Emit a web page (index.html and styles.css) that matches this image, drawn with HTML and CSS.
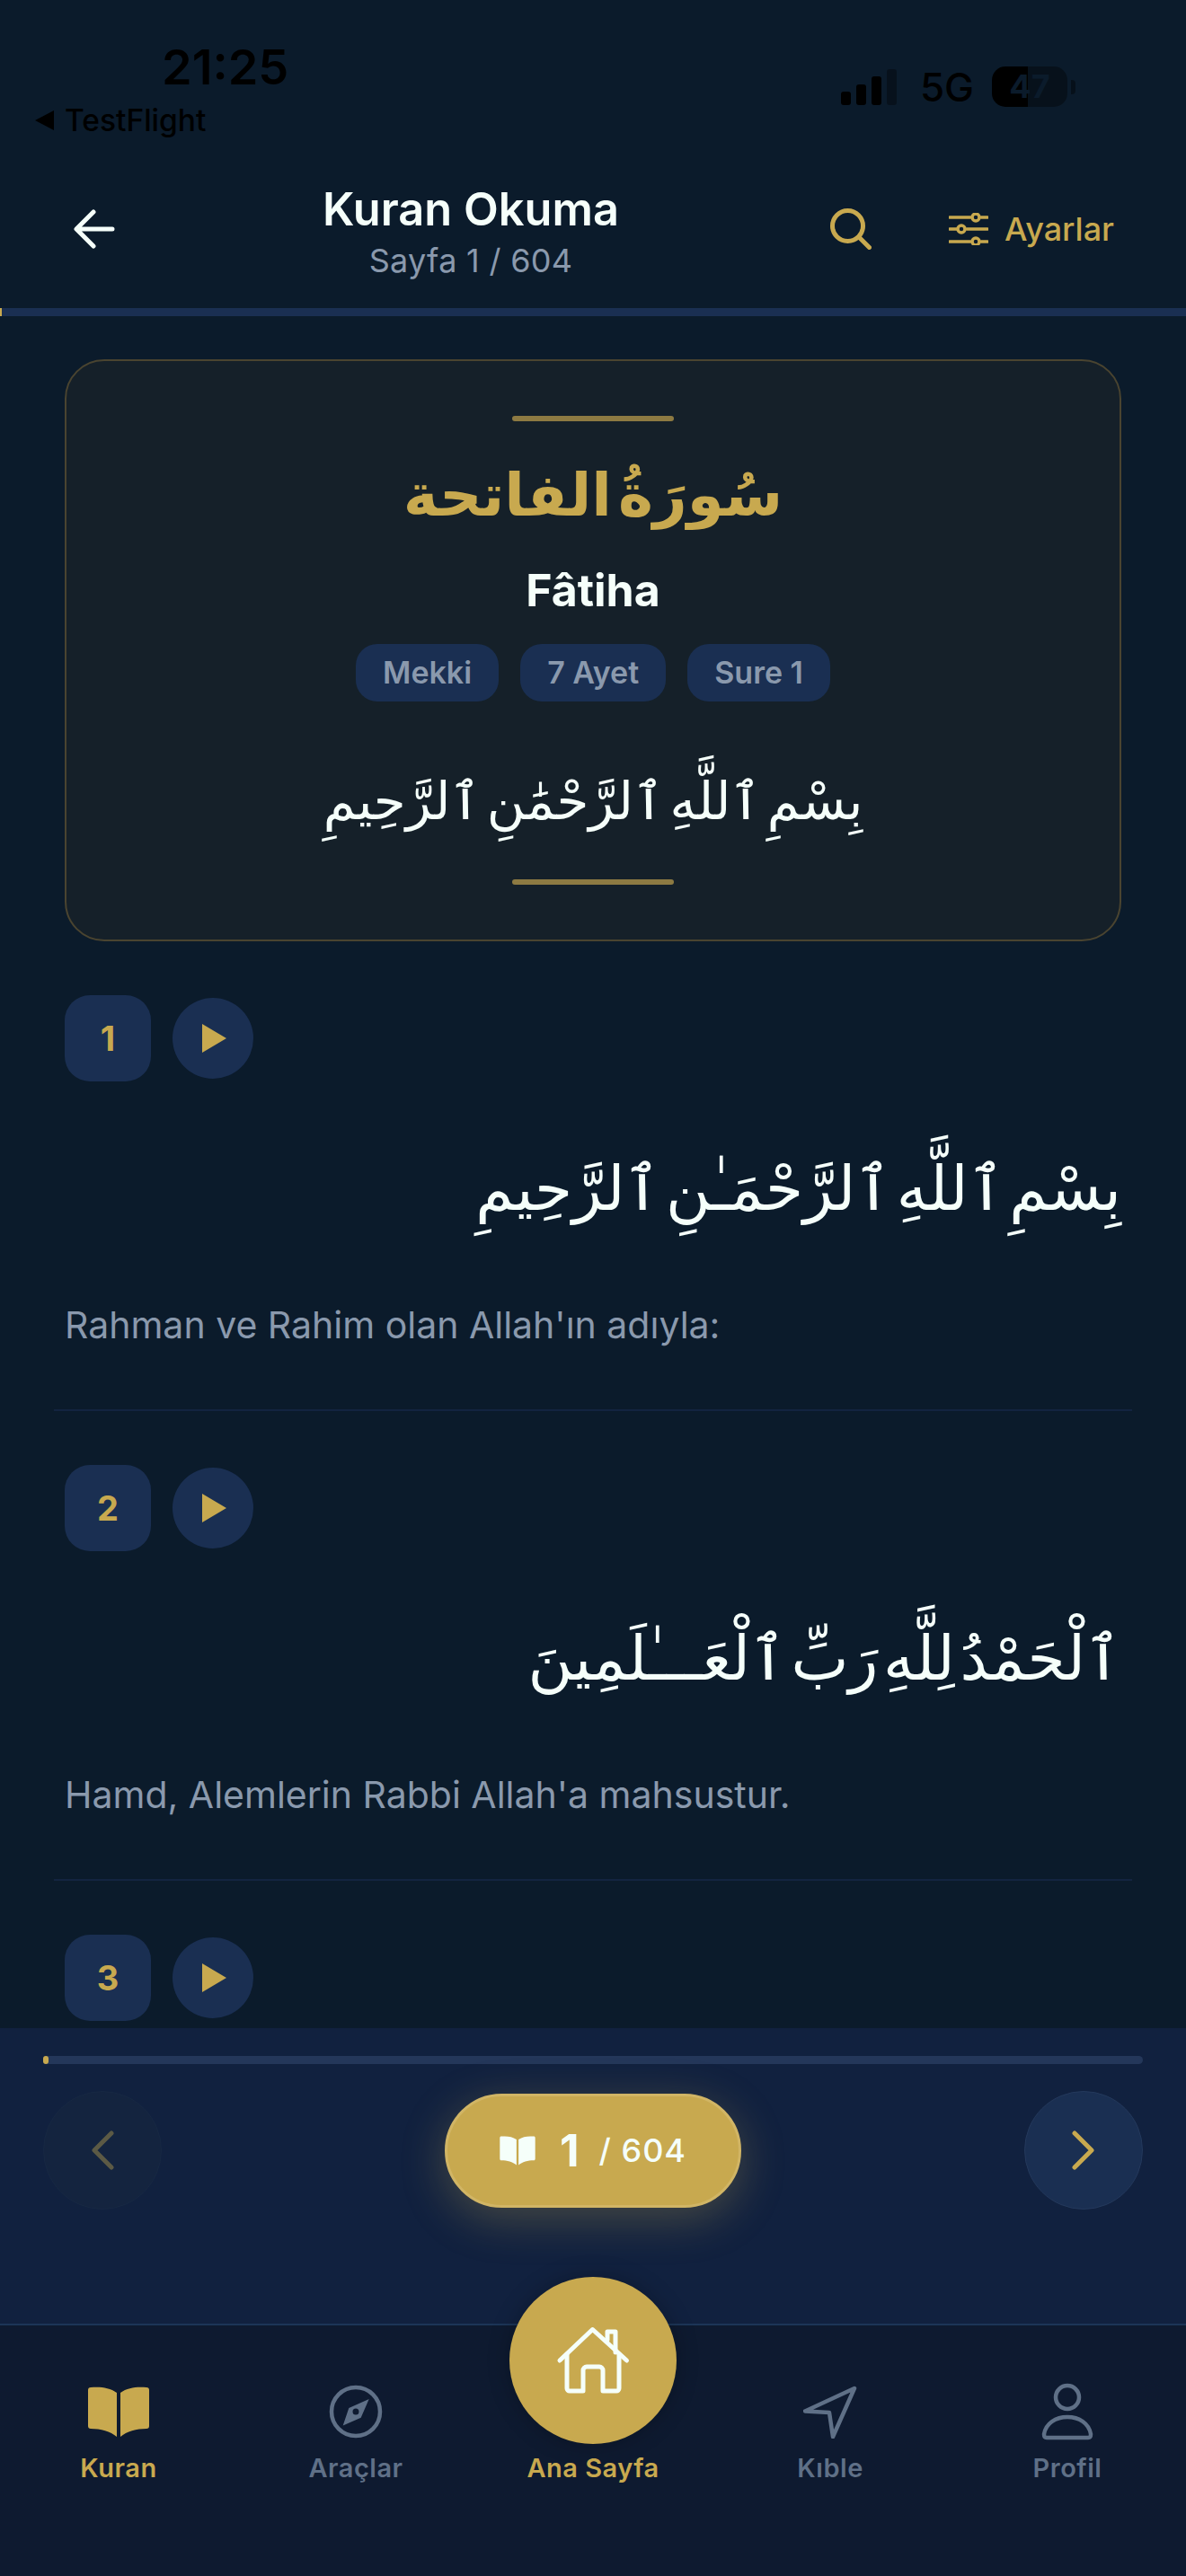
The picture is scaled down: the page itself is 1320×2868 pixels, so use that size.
FILE: index.html
```html
<!DOCTYPE html>
<html lang="tr">
<head>
    <meta charset="UTF-8">
    <meta name="viewport" content="width=device-width, initial-scale=1.0">
    <title>Kuran Okuma</title>
    <link rel="stylesheet" href="styles.css">
</head>
<body>
    <div class="app">
        <div class="status-bar">
            <div class="status-left">
                <div class="status-time">21:25</div>
                <div class="status-back"><span class="back-triangle"></span>TestFlight</div>
            </div>
            <div class="status-right">
                <div class="signal">
                    <span class="signal-bar bar-1"></span>
                    <span class="signal-bar bar-2"></span>
                    <span class="signal-bar bar-3"></span>
                    <span class="signal-bar bar-4"></span>
                </div>
                <div class="network">5G</div>
                <div class="battery">
                    <div class="battery-body">47</div>
                    <span class="battery-nub"></span>
                </div>
            </div>
        </div>

        <header class="top-header">
            <svg class="back-arrow" width="46" height="44" viewBox="0 0 46 44" fill="none" stroke="#f5fffa" stroke-width="5" stroke-linecap="round" stroke-linejoin="round">
                <path d="M43 22H4M22 3 3 22l19 19"/>
            </svg>
            <div class="header-title">
                <h1>Kuran Okuma</h1>
                <div class="header-sub">Sayfa 1 / 604</div>
            </div>
            <div class="header-actions">
                <svg width="46" height="46" viewBox="0 0 46 46" fill="none" stroke="#c8a94f" stroke-width="5" stroke-linecap="round">
                    <circle cx="19.500" cy="19.500" r="17"/>
                    <path d="M32 32l11.500 11.500"/>
                </svg>
                <div class="settings">
                    <svg width="44" height="36" viewBox="0 0 44 36" fill="none" stroke="#c8a94f" stroke-width="3.500" stroke-linecap="round">
                        <path d="M1 5h23M36 5h7M1 18h8M20 18h23M1 32h23M36 32h7"/>
                        <circle cx="30" cy="5" r="4"/>
                        <circle cx="14" cy="18" r="4"/>
                        <circle cx="30" cy="32" r="4"/>
                    </svg>
                    <span>Ayarlar</span>
                </div>
            </div>
        </header>

        <div class="read-progress"><div class="read-progress-fill"></div></div>

        <main class="content">
            <section class="sura-card">
                <div class="sura-line"></div>
                <div class="sura-arabic" dir="rtl" lang="ar">سُورَةُ الفاتحة</div>
                <div class="sura-name">Fâtiha</div>
                <div class="sura-tags">
                    <span class="tag">Mekki</span>
                    <span class="tag">7 Ayet</span>
                    <span class="tag">Sure 1</span>
                </div>
                <div class="sura-basmala" dir="rtl" lang="ar">بِسْمِ ٱللَّهِ ٱلرَّحْمَٰنِ ٱلرَّحِيمِ</div>
                <div class="sura-line"></div>
            </section>

            <article class="verse">
                <div class="verse-head">
                    <div class="verse-num">1</div>
                    <div class="verse-play"><span class="play-icon"></span></div>
                </div>
                <div class="verse-arabic" dir="rtl" lang="ar">بِسْمِ ٱللَّهِ ٱلرَّحْمَـٰنِ ٱلرَّحِيمِ</div>
                <p class="verse-text">Rahman ve Rahim olan Allah'ın adıyla:</p>
            </article>

            <article class="verse">
                <div class="verse-head">
                    <div class="verse-num">2</div>
                    <div class="verse-play"><span class="play-icon"></span></div>
                </div>
                <div class="verse-arabic" dir="rtl" lang="ar">ٱلْحَمْدُ لِلَّهِ رَبِّ ٱلْعَـــٰلَمِينَ</div>
                <p class="verse-text">Hamd, Alemlerin Rabbi Allah'a mahsustur.</p>
            </article>

            <article class="verse">
                <div class="verse-head">
                    <div class="verse-num">3</div>
                    <div class="verse-play"><span class="play-icon"></span></div>
                </div>
            </article>
        </main>

        <section class="page-panel">
            <div class="page-track"><div class="page-track-fill"></div></div>
            <div class="page-row">
                <div class="page-btn page-btn-off">
                    <svg width="26" height="44" viewBox="0 0 26 44" fill="none" stroke="#5c5a45" stroke-width="5" stroke-linecap="round" stroke-linejoin="round">
                        <path d="M23 3 4 22l19 19"/>
                    </svg>
                </div>
                <div class="page-pill">
                    <svg width="40" height="33" viewBox="0 0 68 57" fill="#f5fffa">
                        <path d="M3 1C13 0 24 1 32 7V56C25 50 14 47 3 47 1 47 0 46 0 44V4C0 2 1 1 3 1Z"/>
                        <path d="M65 1C55 0 44 1 36 7V56C43 50 54 47 65 47 67 47 68 46 68 44V4C68 2 67 1 65 1Z"/>
                    </svg>
                    <span class="page-current">1</span>
                    <span class="page-total">/ 604</span>
                </div>
                <div class="page-btn">
                    <svg width="26" height="44" viewBox="0 0 26 44" fill="none" stroke="#c8a94f" stroke-width="5" stroke-linecap="round" stroke-linejoin="round">
                        <path d="M3 3l19 19L3 41"/>
                    </svg>
                </div>
            </div>
        </section>

        <nav class="tab-bar">
            <div class="tab tab-active">
                <div class="tab-icon">
                    <svg width="68" height="57" viewBox="0 0 68 57" fill="#c8a94f">
                        <path d="M3 1C13 0 24 1 32 7V56C25 50 14 47 3 47 1 47 0 46 0 44V4C0 2 1 1 3 1Z"/>
                        <path d="M65 1C55 0 44 1 36 7V56C43 50 54 47 65 47 67 47 68 46 68 44V4C68 2 67 1 65 1Z"/>
                    </svg>
                </div>
                <span>Kuran</span>
            </div>
            <div class="tab">
                <div class="tab-icon">
                    <svg width="60" height="60" viewBox="-30 -30 60 60" fill="none" stroke="#5f7087" stroke-width="4.500">
                        <circle r="27"/>
                        <path fill="#5f7087" fill-rule="evenodd" stroke="none" d="M14.700-14 5.700 6.700-14.300 15.400-7.700-4ZM0-3.500A3.500 3.500 0 1 0 0 3.500 3.500 3.500 0 1 0 0-3.500Z"/>
                    </svg>
                </div>
                <span>Araçlar</span>
            </div>
            <div class="tab tab-active">
                <div class="tab-icon"></div>
                <span>Ana Sayfa</span>
                <div class="home-btn">
                    <svg width="84" height="76" viewBox="0 0 84 76" fill="none" stroke="#f5fffa" stroke-width="5" stroke-linecap="round" stroke-linejoin="round">
                        <path d="M5 38 41.500 3.500 79.500 38"/>
                        <path d="M13 31V69a3 3 0 0 0 3 3H31V49a4 4 0 0 1 4-4H49a4 4 0 0 1 4 4V72H68a3 3 0 0 0 3-3V31"/>
                        <path d="M58 15V6H67V29"/>
                    </svg>
                </div>
            </div>
            <div class="tab">
                <div class="tab-icon">
                    <svg width="60" height="60" viewBox="0 0 60 60" fill="none" stroke="#5f7087" stroke-width="4.500" stroke-linejoin="round">
                        <path d="M57 4 2 29.500 29 31 33 58Z"/>
                    </svg>
                </div>
                <span>Kıble</span>
            </div>
            <div class="tab">
                <div class="tab-icon">
                    <svg width="60" height="64" viewBox="0 0 60 64" fill="none" stroke="#5f7087" stroke-width="4.500" stroke-linejoin="round">
                        <circle cx="30" cy="16" r="13"/>
                        <path d="M4 57C6 45 17 38 30 38S54 45 56 57C56 60 55 61 53 61H7C5 61 4 60 4 57Z"/>
                    </svg>
                </div>
                <span>Profil</span>
            </div>
        </nav>
    </div>
</body>
</html>
```

FILE: styles.css
```css
* {
    box-sizing: border-box;
}
body {
    margin: 0;
    padding: 0;
    background-color: #0b1b2b;
    font-family: 'Inter', 'Roboto', sans-serif;
    color: #f5fffa;
}
.app {
    width: 1320px;
    height: 2868px;
    display: flex;
    flex-direction: column;
    overflow: hidden;
    background-color: #0b1b2b;
}

/* status bar */
.status-bar {
    height: 170px;
    display: flex;
    justify-content: space-between;
    color: #000;
    flex-shrink: 0;
}
.status-left {
    padding: 48px 0 0 39px;
}
.status-time {
    padding-left: 141px;
    font-size: 54px;
    line-height: 54px;
    font-weight: 600;
}
.status-back {
    display: flex;
    align-items: center;
    gap: 12px;
    margin-top: 14px;
    font-size: 33.500px;
    line-height: 36px;
    font-weight: 500;
}
.back-triangle {
    width: 0;
    height: 0;
    border-top: 11px solid transparent;
    border-bottom: 11px solid transparent;
    border-right: 21px solid #000;
}
.status-right {
    display: flex;
    align-items: flex-start;
    padding: 74px 123px 0 0;
}
.signal {
    display: flex;
    align-items: flex-end;
    gap: 6px;
    height: 40px;
    margin-top: 3px;
}
.signal-bar {
    width: 11px;
    background-color: #000;
    border-radius: 3px;
}
.bar-1 { height: 15px; }
.bar-2 { height: 23px; }
.bar-3 { height: 32px; }
.bar-4 { height: 40px; background-color: rgba(0, 0, 0, 0.35); }
.network {
    margin-left: 26px;
    font-size: 44px;
    line-height: 46px;
    font-weight: 500;
}
.battery {
    display: flex;
    align-items: center;
    gap: 4px;
    margin-left: 20px;
}
.battery-body {
    width: 84px;
    height: 45px;
    border-radius: 15px;
    background: linear-gradient(90deg, #000 48%, rgba(0, 0, 0, 0.38) 48%);
    color: #0b1b2b;
    font-size: 36px;
    line-height: 45px;
    font-weight: 700;
    text-align: center;
}
.battery-nub {
    width: 5px;
    height: 16px;
    border-radius: 0 4px 4px 0;
    background-color: rgba(0, 0, 0, 0.38);
}

/* header */
.top-header {
    height: 173px;
    display: flex;
    align-items: flex-start;
    padding: 38px 80px 0 82px;
    flex-shrink: 0;
}
.back-arrow {
    margin-top: 25px;
}
.header-title {
    flex: 1;
    text-align: center;
    padding-right: 4px;
}
.header-title h1 {
    margin: 0;
    font-size: 50.500px;
    line-height: 50px;
    font-weight: 600;
}
.header-sub {
    margin-top: 12px;
    font-size: 36px;
    line-height: 40px;
    letter-spacing: 0.3px;
    color: #8a99ad;
}
.header-actions {
    display: flex;
    align-items: center;
    justify-content: space-between;
    width: 316px;
    margin-top: 24px;
    color: #c8a94f;
}
.settings {
    display: flex;
    align-items: center;
    gap: 18px;
    font-size: 36px;
    font-weight: 500;
}
.read-progress {
    height: 9px;
    background-color: #1a2f52;
    flex-shrink: 0;
}
.read-progress-fill {
    width: 2px;
    height: 100%;
    background-color: #c8a94f;
}

/* reading area */
.content {
    flex: 1;
    min-height: 0;
    overflow: hidden;
    padding: 48px 72px 0;
}
.sura-card {
    display: flex;
    flex-direction: column;
    align-items: center;
    padding: 61px 0;
    background-color: #152029;
    border: 2px solid #4a4430;
    border-radius: 44px;
}
.sura-line {
    width: 180px;
    height: 6px;
    border-radius: 3px;
    background-color: #8d7a42;
}
.sura-arabic {
    margin-top: 33px;
    font-family: 'DejaVu Sans', sans-serif;
    font-size: 66px;
    line-height: 100px;
    font-weight: 700;
    word-spacing: -16px;
    color: #c8a94f;
}
.sura-name {
    margin-top: 25px;
    font-size: 50px;
    line-height: 60px;
    font-weight: 700;
}
.sura-tags {
    display: flex;
    gap: 24px;
    margin-top: 30px;
}
.tag {
    padding: 0 30px;
    height: 64px;
    border-radius: 24px;
    background-color: #1a2f52;
    color: #8a99ad;
    font-size: 34px;
    line-height: 64px;
    font-weight: 600;
}
.sura-basmala {
    margin: 56px 0 32px;
    font-family: 'DejaVu Sans', sans-serif;
    font-size: 58px;
    line-height: 110px;
    word-spacing: -12px;
}
.verse {
    margin: 0 -12px;
    padding: 60px 12px 64px;
    border-bottom: 2px solid #132440;
}
.verse-head {
    display: flex;
    align-items: center;
    gap: 24px;
}
.verse-num {
    width: 96px;
    height: 96px;
    border-radius: 28px;
    background-color: #1a2f52;
    color: #c8a94f;
    font-size: 38px;
    font-weight: 700;
    line-height: 96px;
    text-align: center;
}
.verse-play {
    width: 90px;
    height: 90px;
    border-radius: 50%;
    background-color: #1a2f52;
    display: flex;
    align-items: center;
    justify-content: center;
}
.play-icon {
    margin-left: 3px;
    width: 0;
    height: 0;
    border-top: 16px solid transparent;
    border-bottom: 16px solid transparent;
    border-left: 27px solid #c8a94f;
}
.verse-arabic {
    margin-top: 45px;
    font-family: 'DejaVu Sans', sans-serif;
    font-size: 68px;
    line-height: 150px;
    word-spacing: -16px;
}
.verse-text {
    margin: 46px 0 0;
    font-size: 41px;
    line-height: 60px;
    color: #8a99ad;
}

/* page panel */
.page-panel {
    height: 329px;
    padding: 31px 48px 0;
    background-color: #11213f;
    flex-shrink: 0;
}
.page-track {
    height: 9px;
    border-radius: 5px;
    background-color: #24375a;
}
.page-track-fill {
    width: 6px;
    height: 100%;
    border-radius: 3px;
    background-color: #c8a94f;
}
.page-row {
    display: flex;
    align-items: center;
    justify-content: space-between;
    margin-top: 30px;
}
.page-btn {
    width: 132px;
    height: 132px;
    border-radius: 50%;
    border: 1px solid #24395c;
    background-color: #1a2f52;
    display: flex;
    align-items: center;
    justify-content: center;
}
.page-btn-off {
    background-color: #14243f;
    border-color: #172843;
}
.page-pill {
    width: 330px;
    height: 127px;
    border-radius: 64px;
    border: 3px solid #d1b565;
    background-color: #c8a94f;
    box-shadow: 0 12px 50px rgba(200, 169, 79, 0.3);
    display: flex;
    align-items: center;
    justify-content: center;
}
.page-current {
    margin-left: 27px;
    font-size: 50px;
    font-weight: 700;
}
.page-total {
    margin-left: 22px;
    font-size: 36px;
    font-weight: 500;
    letter-spacing: 1px;
}

/* tab bar */
.tab-bar {
    position: relative;
    height: 281px;
    display: grid;
    grid-template-columns: repeat(5, 1fr);
    padding-top: 64px;
    background-color: #0e1a30;
    border-top: 2px solid #1c3557;
    flex-shrink: 0;
}
.tab {
    display: flex;
    flex-direction: column;
    align-items: center;
    color: #5f7087;
    font-size: 29px;
    line-height: 36px;
    font-weight: 600;
    letter-spacing: 0.5px;
}
.tab-icon {
    height: 64px;
    margin-bottom: 13px;
    display: flex;
    align-items: center;
    justify-content: center;
}
.tab-active {
    color: #c8a94f;
}
.home-btn {
    position: absolute;
    top: -54px;
    left: 50%;
    width: 186px;
    height: 186px;
    margin-left: -93px;
    border-radius: 50%;
    background-color: #c8a94f;
    box-shadow: 0 0 24px rgba(0, 0, 0, 0.25);
    display: flex;
    align-items: center;
    justify-content: center;
}
```
